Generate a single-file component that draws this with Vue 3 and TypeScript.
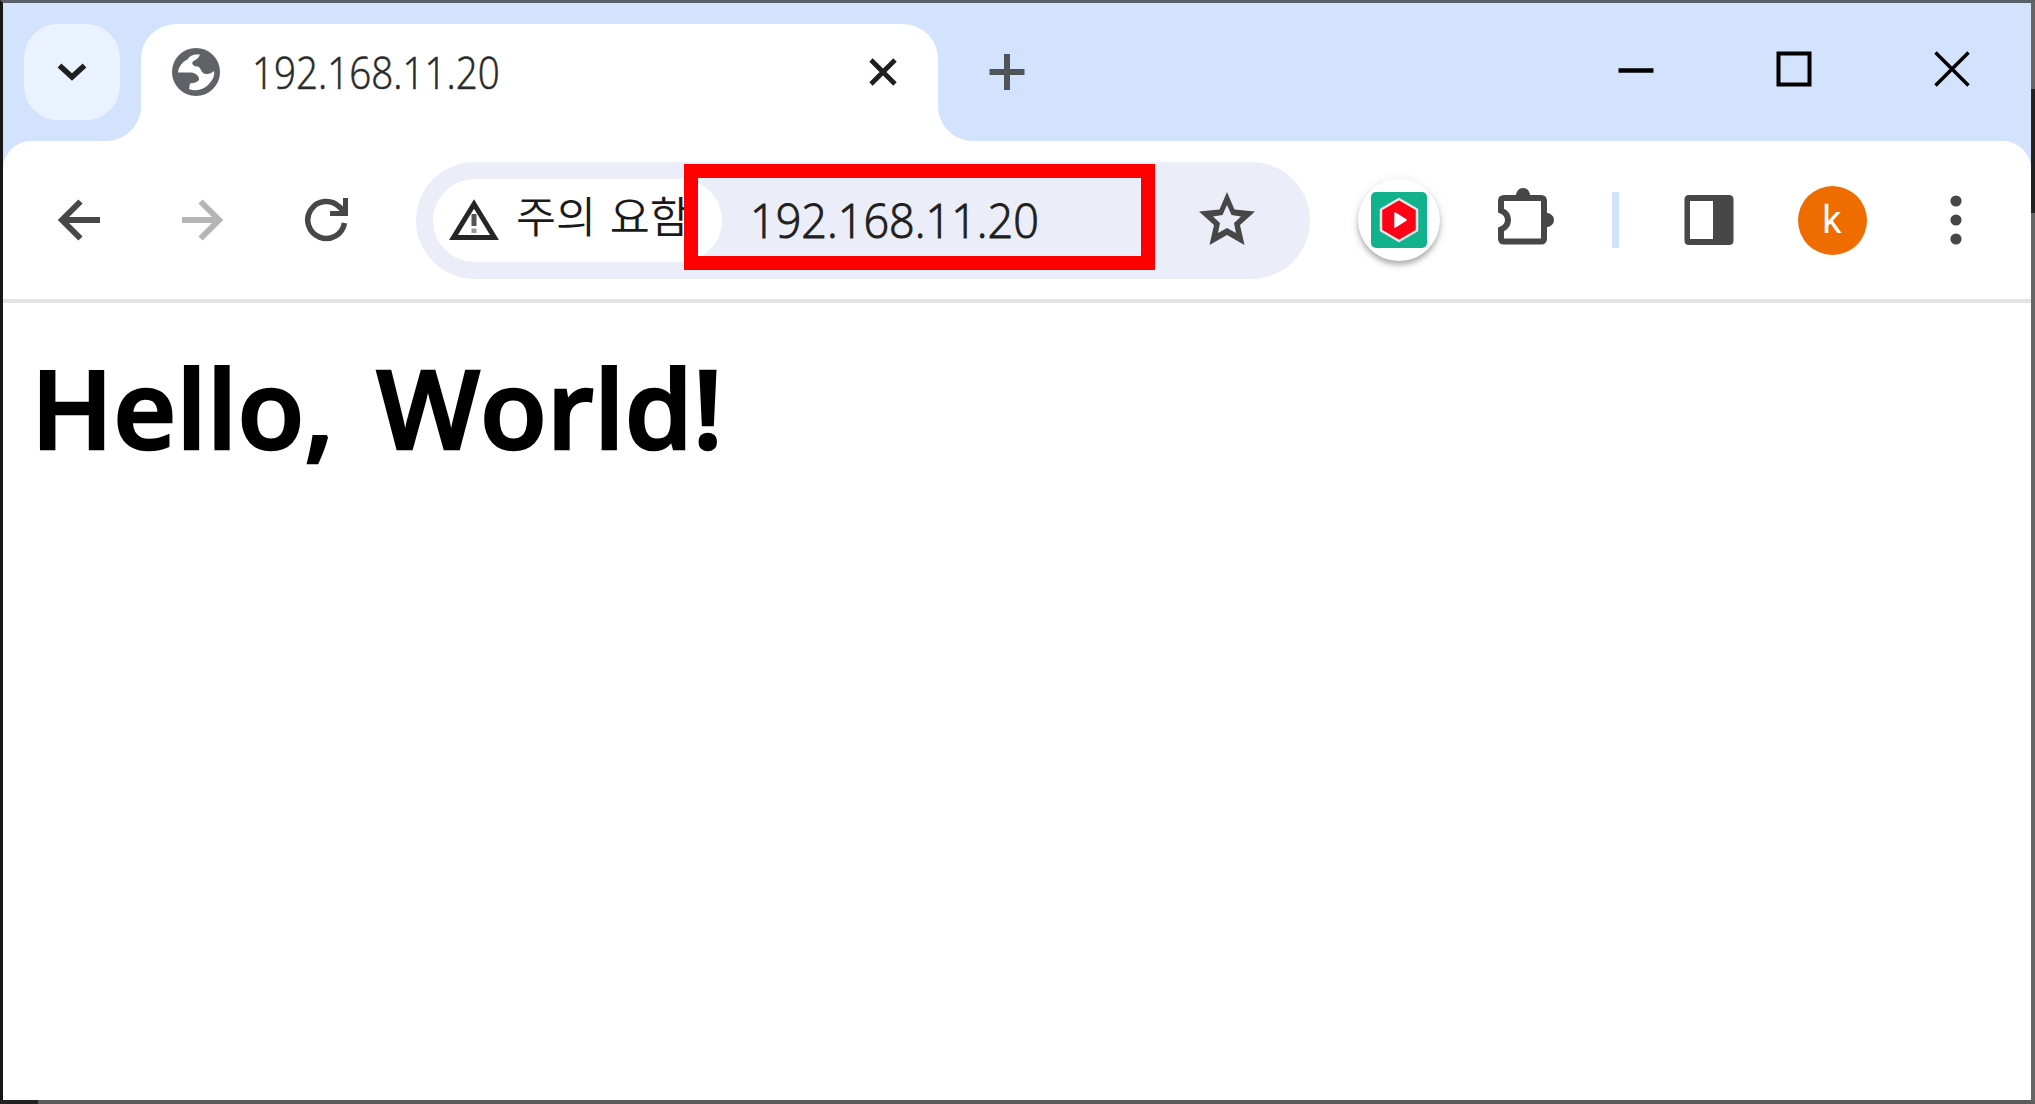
<script setup lang="ts">
import { ref } from 'vue'

const address = ref<string>('192.168.11.20')
const securityLabel = ref<string>('주의 요함')
const heading = ref<string>('Hello, World!')
const profileInitial = ref<string>('k')
</script>

<template>
  <div class="window">
    <header class="tab-strip">
      <button class="tab-search" aria-label="Search tabs">
        <svg width="32" height="22" viewBox="0 0 32 22"><path d="M3.500 4.500L16 16L28.500 4.500" fill="none" stroke="#1f1f1f" stroke-width="5.500" /></svg>
      </button>
      <div class="tab">
        <svg class="globe" width="48" height="48" viewBox="0 0 48 48">
          <circle cx="24" cy="24" r="24" fill="#5f6368" />
          <path d="M28 6.500C21 6 18 7.500 15.500 11.500C10 14 6.500 19 6 24.500H20C24 25.500 27 28 27 31C27 34 22 35 18 35.500L17 41C24 43.500 31 42 36 37C40.500 32.500 43 28 42 23C39 25.500 36 27 32 25.500C29 24 29 20 26 18.500C22 18.500 19.500 16.500 20.500 14C22 12 26 12 28 6.500Z" fill="#fff" />
        </svg>
        <span class="tab-title"><span>{{ address }}</span></span>
        <svg class="tab-close" width="28" height="30" viewBox="0 0 28 30"><path d="M2 3L26 27M26 3L2 27" stroke="#1f1f1f" stroke-width="4.800" /></svg>
      </div>
      <svg class="new-tab" width="36" height="38" viewBox="0 0 36 38"><path d="M18 1V37M0.500 19H35.500" stroke="#505358" stroke-width="6" /></svg>
      <div class="controls">
        <svg width="36" height="36" viewBox="0 0 36 36"><path d="M0.500 19.500H35.500" stroke="#000" stroke-width="4.500" /></svg>
        <svg width="36" height="36" viewBox="0 0 36 36"><rect x="2.500" y="2.500" width="31" height="31" fill="none" stroke="#000" stroke-width="4" /></svg>
        <svg width="36" height="36" viewBox="0 0 36 36"><path d="M1.500 1.500L34.500 34.500M34.500 1.500L1.500 34.500" stroke="#000" stroke-width="3.500" /></svg>
      </div>
    </header>

    <nav class="toolbar">
      <button class="nav-button" aria-label="Back">
        <svg width="44" height="44" viewBox="0 0 44 44"><path d="M43 22H5M23.500 3.500L5 22L23.500 40.500" fill="none" stroke="#474747" stroke-width="6" /></svg>
      </button>
      <button class="nav-button" aria-label="Forward">
        <svg width="44" height="44" viewBox="0 0 44 44"><path d="M1 22H38M19.500 3.500L38 22L19.500 40.500" fill="none" stroke="#b5b5b5" stroke-width="6" /></svg>
      </button>
      <button class="nav-button" aria-label="Reload">
        <svg width="48" height="48" viewBox="0 0 48 48">
          <path d="M41.500 27A18.500 18.500 0 1 1 36.500 11L43 17.500" fill="none" stroke="#474747" stroke-width="5.500" />
          <path d="M42.500 2V17.500H27" fill="none" stroke="#474747" stroke-width="5" />
        </svg>
      </button>

      <div class="omnibox">
        <div class="security">
          <svg width="50" height="42" viewBox="0 0 50 42">
            <path d="M25 5L45.500 38.500H4.500Z" fill="none" stroke="#262626" stroke-width="5" />
            <path d="M25 15V27" stroke="#555" stroke-width="5" />
            <path d="M25 29.500V34" stroke="#999" stroke-width="5" />
          </svg>
          <span class="security-label">{{ securityLabel }}</span>
        </div>
        <span class="url"><span>{{ address }}</span></span>
        <svg class="star" width="56" height="54" viewBox="0 0 56 54">
          <path fill-rule="evenodd" d="M28 0L35.500 17.500L56 19.500L41 33L45.500 53L28 43L10.500 53L15 33L0 19.500L20.500 17.500ZM28 13L23.500 23L14 24.500L21 31L19 41L28 36L37 41L35 31L42 24.500L32.500 23Z" fill="#474747" />
        </svg>
        <div class="highlight"></div>
      </div>

      <div class="extension">
        <svg width="56" height="56" viewBox="0 0 56 56">
          <rect width="56" height="56" rx="5" fill="#12b28c" />
          <path d="M28 7L46 17.500V38.500L28 49L10 38.500V17.500Z" fill="#ff0014" stroke="#ece6e6" stroke-width="2.500" stroke-linejoin="round" />
          <path d="M24 21L35 28L24 35Z" fill="#fff" stroke="#fff" stroke-width="1.500" stroke-linejoin="round" />
        </svg>
      </div>
      <svg class="puzzle" width="60" height="60" viewBox="0 0 60 60">
        <path d="M5 23.500V14Q5 11 8 11H45Q48 11 48 14V51.500Q48 54.500 45 54.500H8Q5 54.500 5 51.500V42.500Q12 39.500 12 33Q12 26.500 5 23.500Z" fill="none" stroke="#474747" stroke-width="6" />
        <path d="M19.500 10Q20.500 1 27 1Q33.500 1 34.500 10ZM49 25.500Q58 26.500 58 33Q58 39.500 49 40.500Z" fill="#474747" />
      </svg>
      <div class="divider"></div>
      <svg class="panel" width="50" height="52" viewBox="0 0 50 52">
        <path fill-rule="evenodd" d="M5 1H45Q49.500 1 49.500 5.500V46.500Q49.500 51 45 51H5Q0.500 51 0.500 46.500V5.500Q0.500 1 5 1ZM6 7V45H29V7Z" fill="#474747" />
      </svg>
      <div class="avatar"><span>{{ profileInitial }}</span></div>
      <svg class="menu" width="12" height="52" viewBox="0 0 12 52">
        <circle v-for="cy in [7, 26, 45]" :key="cy" cx="6" :cy="cy" r="5.600" fill="#474747" />
      </svg>
    </nav>

    <main class="page">
      <h1><span>{{ heading }}</span></h1>
    </main>
    <div class="edge edge-right"></div>
    <div class="edge edge-bottom"></div>
  </div>
</template>

<style>
body {
  margin: 0;
}
</style>

<style scoped>
.window {
  position: relative;
  box-sizing: border-box;
  width: 2035px;
  height: 1104px;
  display: flex;
  flex-direction: column;
  border-style: solid;
  border-width: 3px 4px 4px 3px;
  border-color: #5b5f68 #666 #5c5c5c #171719;
  background: #d3e3fd;
  font-family: "Open Sans", "Noto Sans", "Noto Sans CJK KR", sans-serif;
}
svg {
  display: block;
  flex: none;
}
button {
  border: 0;
  padding: 0;
  background: none;
  display: flex;
  align-items: center;
  justify-content: center;
}
.tab-strip {
  flex: none;
  height: 138px;
  display: flex;
  align-items: flex-start;
}
.tab-search {
  width: 96px;
  height: 96px;
  margin: 21px 0 0 21px;
  border-radius: 34px;
  background: #ebf2ff;
}
.tab {
  position: relative;
  box-sizing: border-box;
  width: 797px;
  height: 117px;
  margin: 21px 0 0 21px;
  padding: 24px 41px 0 31px;
  display: flex;
  align-items: flex-start;
  border-radius: 35px 35px 0 0;
  background: #fff;
}
.tab::before,
.tab::after {
  content: "";
  position: absolute;
  bottom: 0;
  width: 35px;
  height: 35px;
}
.tab::before {
  right: 100%;
  background: radial-gradient(circle at 0 0, transparent 34.500px, #fff 35.500px);
}
.tab::after {
  left: 100%;
  background: radial-gradient(circle at 100% 0, transparent 34.500px, #fff 35.500px);
}
.tab-title {
  width: 260px;
  height: 48px;
  margin: 1px 0 0 32px;
  font-size: 43.500px;
  line-height: 48px;
  font-weight: 300;
  color: #2a2a2a;
  -webkit-text-stroke: 0.600px #2a2a2a;
  white-space: nowrap;
}
.tab-title span {
  display: inline-block;
  transform: scaleX(0.887);
  transform-origin: 0 50%;
}
.tab-close {
  margin: 9px 0 0 auto;
}
.new-tab {
  margin: 50px 0 0 51px;
}
.controls {
  display: flex;
  gap: 122px;
  margin: 48px 61px 0 auto;
}
.toolbar {
  flex: none;
  box-sizing: border-box;
  height: 162px;
  padding: 0 0 0 14px;
  display: flex;
  align-items: center;
  border-bottom: 4px solid #e2e4e1;
  border-radius: 28px 28px 0 0;
  background: #fff;
}
.nav-button {
  width: 124px;
  height: 100px;
}
.omnibox {
  position: relative;
  box-sizing: border-box;
  width: 894px;
  height: 117px;
  margin-left: 27px;
  padding: 0 55px 0 17px;
  display: flex;
  align-items: center;
  border-radius: 59px;
  background: #ebeef8;
}
.security {
  box-sizing: border-box;
  width: 289px;
  height: 83px;
  padding-left: 16px;
  display: flex;
  align-items: center;
  border-radius: 42px;
  background: #fff;
}
.security-label {
  margin: -10px 0 0 17px;
  font-family: "Noto Sans CJK KR", sans-serif;
  font-size: 43.500px;
  line-height: 60px;
  font-weight: 350;
  color: #1a1a1a;
  white-space: nowrap;
  word-spacing: 4px;
}
.url {
  width: 300px;
  margin-left: 28px;
  font-size: 48px;
  line-height: 60px;
  font-weight: 300;
  color: #1f1f1f;
  -webkit-text-stroke: 1px #1f1f1f;
  white-space: nowrap;
}
.url span {
  display: inline-block;
  transform: scaleX(0.937);
  transform-origin: 0 50%;
}
.star {
  margin: -2px 0 0 auto;
}
.highlight {
  position: absolute;
  left: 268px;
  top: 2px;
  box-sizing: border-box;
  width: 471px;
  height: 106px;
  border: 14px solid #f00;
}
.extension {
  width: 82px;
  height: 82px;
  margin-left: 48px;
  display: flex;
  align-items: center;
  justify-content: center;
  border-radius: 50%;
  background: #fff;
  box-shadow: 0 4px 5px rgba(0, 0, 0, 0.26), 0 2px 12px rgba(0, 0, 0, 0.1);
}
.puzzle {
  margin: -6px 0 0 56px;
}
.divider {
  width: 7px;
  height: 56px;
  margin-left: 56px;
  background: #d3e3fd;
}
.panel {
  margin-left: 65px;
}
.avatar {
  width: 69px;
  height: 69px;
  margin-left: 63.500px;
  display: flex;
  align-items: center;
  justify-content: center;
  border-radius: 50%;
  background: #ef6c00;
  color: #fff;
  font: 400 38px/73px Roboto, sans-serif;
}
.menu {
  margin-left: 83.500px;
}
.page {
  flex: 1;
  background: #fff;
}
h1 {
  margin: 30px 0 0 28px;
  font-size: 108.500px;
  line-height: 148px;
  font-weight: 600;
  color: #000;
  -webkit-text-stroke: 2.600px #000;
  white-space: nowrap;
  word-spacing: 14px;
}
h1 span {
  display: inline-block;
  transform: scaleX(1.009);
  transform-origin: 0 50%;
}
.edge {
  position: absolute;
  background: #222;
}
.edge-right {
  right: -4px;
  top: 86px;
  width: 4px;
  height: 124px;
}
.edge-bottom {
  left: -3px;
  bottom: -4px;
  width: 38px;
  height: 4px;
}
</style>
